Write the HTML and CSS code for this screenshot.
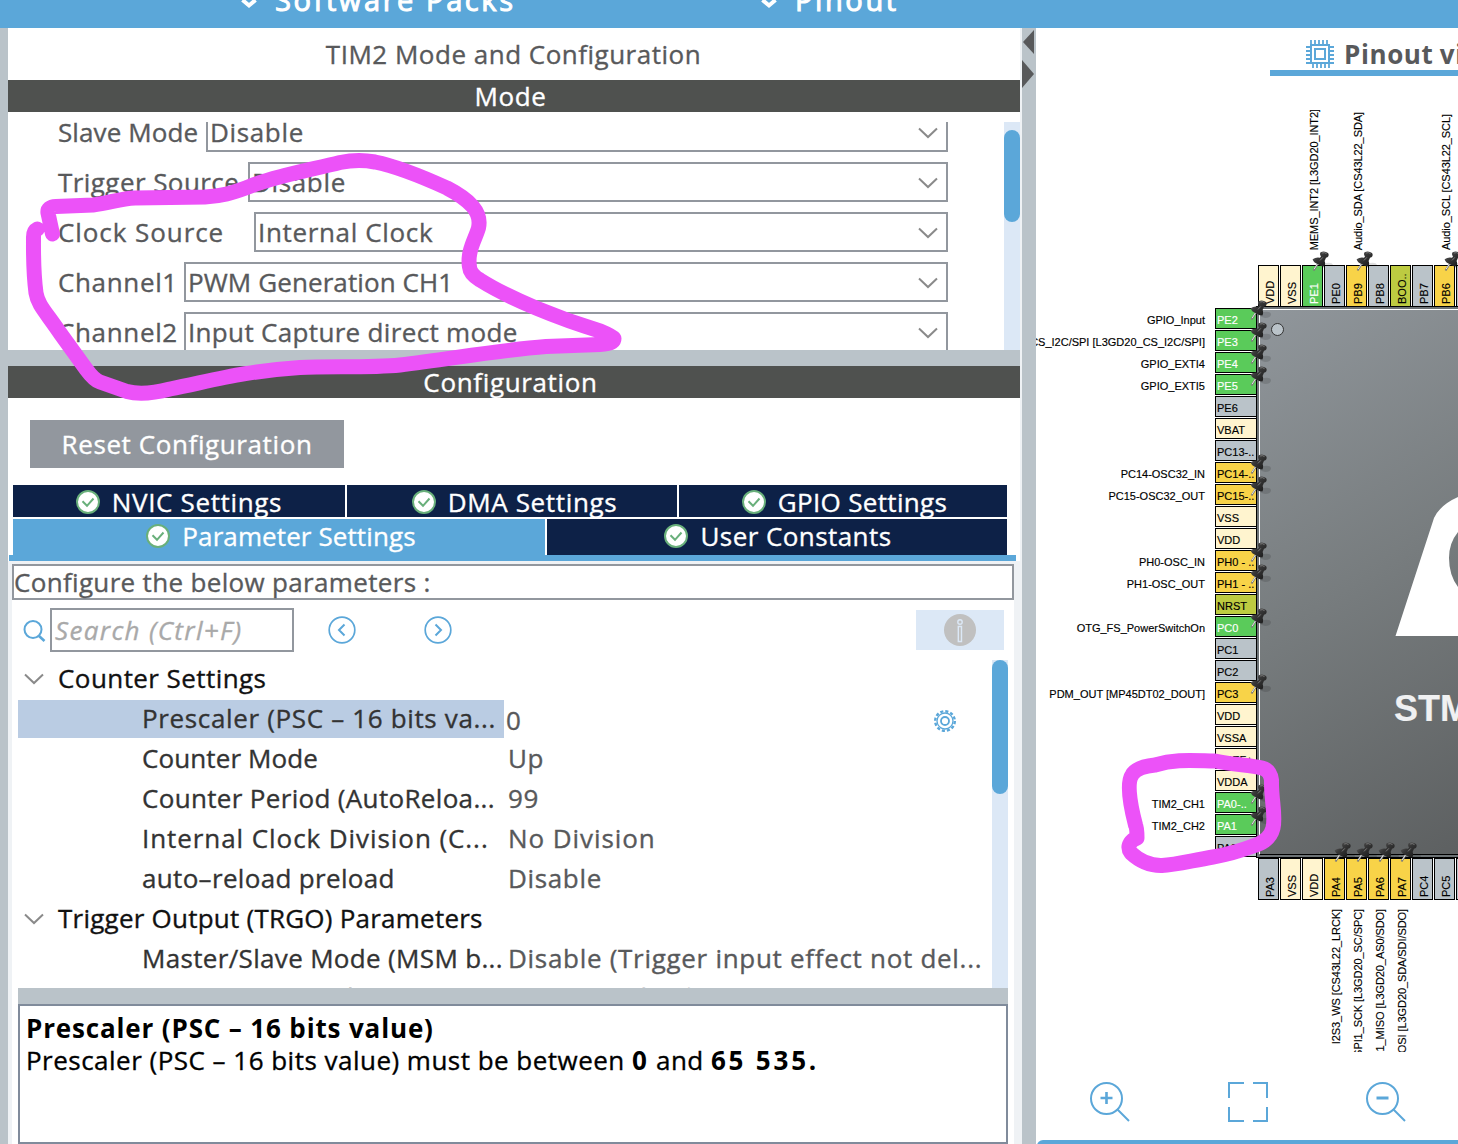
FILE: index.html
```
<!DOCTYPE html>
<html lang="en">
<head>
<meta charset="utf-8">
<title>TIM2 Mode and Configuration</title>
<link rel="stylesheet" href="styles.css">
</head>
<body>
<svg class="defs" width="0" height="0">
  <defs>
    <linearGradient id="metal" x1="0" y1="0" x2="1" y2="1"><stop offset="0" stop-color="#777"/><stop offset=".4" stop-color="#383838"/><stop offset="1" stop-color="#161616"/></linearGradient>
    <symbol id="pushpin" viewBox="0 0 22 22">
      <path d="M9 15 L14 12 Q20 11 21 14 Q21 18 15 18 Q12 18 9 15Z" fill="#000" opacity=".13"/>
      <path d="M1.500 19.500 L6 12.500" stroke="#777" stroke-width="1.900"/><path d="M2.100 18.200 L5.500 12.800" stroke="#eee" stroke-width=".9"/>
      <path d="M0.600 8.200 Q4 6 8 6.800 L9 5.400 Q7.200 3 8.600 1.200 Q12.500 -.6 16 2 Q17.600 4.800 15.400 6.200 L14 6.800 L12.600 10 Q13.800 12.600 12.400 15.600 Q9 15.600 6 13.200 Q1.400 11.600 .6 8.200Z" fill="url(#metal)"/>
      <path d="M10.200 2 Q12.500 1 14.500 2.600" stroke="#8a8a8a" stroke-width=".8" fill="none"/><path d="M8 9.400 L10.800 6.400" stroke="#8a8a8a" stroke-width=".8"/>
    </symbol>
    <symbol id="check" viewBox="0 0 24 24"><circle cx="12" cy="12" r="11" fill="#fff" stroke="#69b07b" stroke-width="2"/><path d="M6.500 11.200 L11 15.800 L17.500 8.500" fill="none" stroke="#69b07b" stroke-width="2"/></symbol>
    <symbol id="chev" viewBox="0 0 20 12"><path d="M1 1.500 L10 10 L19 1.500" fill="none" stroke="#8a8a8a" stroke-width="2"/></symbol>
  </defs>
</svg>

<header class="topbar">
  <div class="menu menu-packs"><svg width="16" height="10" viewBox="0 0 16 10"><path d="M1.500 0 L8 5.500 L14.500 0" fill="none" stroke="#fff" stroke-width="4"/></svg><span>Software Packs</span></div>
  <div class="menu menu-pinout"><svg width="16" height="10" viewBox="0 0 16 10"><path d="M1.500 0 L8 5.500 L14.500 0" fill="none" stroke="#fff" stroke-width="4"/></svg><span>Pinout</span></div>
</header>

<main class="workspace">
  <section class="config">
    <h1 class="title">TIM2 Mode and Configuration</h1>
    <h2 class="bar">Mode</h2>
    <div class="mode">
      <div class="fields">
        <div class="field"><label class="l-slave t1">Slave Mode</label><div class="select"><span>Disable</span><svg><use href="#chev"/></svg></div></div>
        <div class="field"><label class="l-trigger t4">Trigger Source</label><div class="select"><span>Disable</span><svg><use href="#chev"/></svg></div></div>
        <div class="field"><label class="l-clock t9">Clock Source</label><div class="select"><span>Internal Clock</span><svg><use href="#chev"/></svg></div></div>
        <div class="field"><label class="l-channel">Channel1</label><div class="select"><span class="t1">PWM Generation CH1</span><svg><use href="#chev"/></svg></div></div>
        <div class="field"><label class="l-channel">Channel2</label><div class="select"><span class="t3">Input Capture direct mode</span><svg><use href="#chev"/></svg></div></div>
      </div>
      <div class="scroll scroll-mode"><i></i></div>
    </div>
    <div class="splitter"></div>
    <h2 class="bar">Configuration</h2>
    <div class="reset-row"><button class="reset">Reset Configuration</button></div>
    <nav class="tabs tabs-top">
      <a><svg><use href="#check"/></svg>NVIC Settings</a><a><svg><use href="#check"/></svg>DMA Settings</a><a class="t3"><svg><use href="#check"/></svg>GPIO Settings</a>
    </nav>
    <nav class="tabs tabs-bottom">
      <a class="active t1"><svg><use href="#check"/></svg>Parameter Settings</a><a class="t4"><svg><use href="#check"/></svg>User Constants</a>
    </nav>
    <div class="tabline"></div>
    <div class="params">
      <div class="hint t3">Configure the below parameters :</div>
      <div class="search-row">
        <svg class="mag" width="24" height="24" viewBox="0 0 24 24" fill="none" stroke="#5ba7d9"><circle cx="11" cy="10.500" r="8.500" stroke-width="2"/><path d="M17 17 L22.500 22" stroke-width="2.600"/></svg>
        <div class="search">Search (Ctrl+F)</div>
        <svg class="prev" width="28" height="28" viewBox="0 0 28 28" fill="none" stroke="#5ba7d9"><circle cx="14" cy="14" r="12.800" stroke-width="1.700"/><path d="M16.500 8.500 L11 14 L16.500 19.500" stroke-width="2"/></svg>
        <svg class="next" width="28" height="28" viewBox="0 0 28 28" fill="none" stroke="#5ba7d9"><circle cx="14" cy="14" r="12.800" stroke-width="1.700"/><path d="M11.500 8.500 L17 14 L11.500 19.500" stroke-width="2"/></svg>
        <div class="info"><svg width="32" height="32" viewBox="0 0 32 32"><circle cx="16" cy="16" r="16" fill="#c0c0c0"/><circle cx="16" cy="8" r="2.200" fill="none" stroke="#dce8f6" stroke-width="1.400"/><path d="M14.300 12.500 H17.500 V27.500 H14.300Z" fill="none" stroke="#dce8f6" stroke-width="1.400"/></svg></div>
      </div>
      <div class="tree-wrap">
        <div class="tree">
          <div class="group t4"><svg><use href="#chev"/></svg>Counter Settings</div>
          <div class="row selected"><b>Prescaler (PSC – 16 bits va...</b><span>0</span>
            <svg class="gear" width="24" height="24" viewBox="0 0 24 24" fill="none" stroke="#5ba7d9"><circle cx="12" cy="12" r="9.800" stroke-width="2.400" stroke-dasharray="3.100 2.031"/><circle cx="12" cy="12" r="8" stroke-width="1.300"/><circle cx="12" cy="12" r="4" stroke-width="1.800"/></svg></div>
          <div class="row"><b class="t1">Counter Mode</b><span>Up</span></div>
          <div class="row"><b class="t3">Counter Period (AutoReloa...</b><span>99</span></div>
          <div class="row"><b class="t9">Internal Clock Division (C...</b><span class="t9">No Division</span></div>
          <div class="row"><b class="t3">auto–reload preload</b><span>Disable</span></div>
          <div class="group tg"><svg><use href="#chev"/></svg>Trigger Output (TRGO) Parameters</div>
          <div class="row"><b class="t3">Master/Slave Mode (MSM b...</b><span class="t7">Disable (Trigger input effect not del...</span></div>
          <div class="row last"><b>Trigger Event Selection</b><span>Reset (UG bit from TIMx_EGR)</span></div>
        </div>
        <div class="scroll scroll-tree"><i></i></div>
      </div>
      <div class="tree-splitter"></div>
      <div class="details"><strong>Prescaler (PSC – 16 bits value)</strong><p>Prescaler (PSC – 16 bits value) must be between <strong>0</strong> and <strong>65 535.</strong></p></div>
    </div>
  </section>

  <div class="divider"><svg width="14" height="60" viewBox="0 0 14 60" fill="#58595b"><path d="M12 2 V26 L1 14Z"/><path d="M0 32 V60 L12 46Z"/></svg></div>

  <section class="pinout">
    <div class="view-head"><div class="view-tab">
      <svg width="28" height="28" viewBox="0 0 28 28" fill="none" stroke="#5ba7d9" stroke-width="2"><rect x="5" y="5" width="18" height="18"/><rect x="9" y="9" width="10" height="10"/><path d="M5 0V4M9 0V4M13 0V4M17 0V4M21 0V4M7 24V28M11 24V28M15 24V28M19 24V28M23 24V28M0 7H4M0 11H4M0 15H4M0 19H4M0 23H4M24 7H28M24 11H28M24 15H28M24 19H28M24 23H28" stroke-width="1.800"/></svg>
      <span>Pinout view</span></div></div>
    <div class="canvas">
      <div class="side top">
        <div class="col"><em class="power">VDD</em></div>
        <div class="col"><em class="power">VSS</em></div>
        <div class="col"><q>MEMS_INT2 [L3GD20_INT2]</q><em class="on">PE1<svg><use href="#pushpin"/></svg></em></div>
        <div class="col"><em>PE0</em></div>
        <div class="col"><q>Audio_SDA [CS43L22_SDA]</q><em class="warn">PB9<svg><use href="#pushpin"/></svg></em></div>
        <div class="col"><em>PB8</em></div>
        <div class="col"><em class="boot">BOO..</em></div>
        <div class="col"><em>PB7</em></div>
        <div class="col"><q>Audio_SCL [CS43L22_SCL]</q><em class="warn">PB6<svg><use href="#pushpin"/></svg></em></div>
        <div class="col"><em></em></div>
      </div>
      <div class="middle">
        <div class="left">
          <div class="pin"><q>GPIO_Input</q><em class="on">PE2<svg><use href="#pushpin"/></svg></em></div>
          <div class="pin"><q>CS_I2C/SPI [L3GD20_CS_I2C/SPI]</q><em class="on">PE3<svg><use href="#pushpin"/></svg></em></div>
          <div class="pin"><q>GPIO_EXTI4</q><em class="on">PE4<svg><use href="#pushpin"/></svg></em></div>
          <div class="pin"><q>GPIO_EXTI5</q><em class="on">PE5<svg><use href="#pushpin"/></svg></em></div>
          <div class="pin"><em>PE6</em></div>
          <div class="pin"><em class="power">VBAT</em></div>
          <div class="pin"><em>PC13-..</em></div>
          <div class="pin"><q>PC14-OSC32_IN</q><em class="warn">PC14-..<svg><use href="#pushpin"/></svg></em></div>
          <div class="pin"><q>PC15-OSC32_OUT</q><em class="warn">PC15-..<svg><use href="#pushpin"/></svg></em></div>
          <div class="pin"><em class="power">VSS</em></div>
          <div class="pin"><em class="power">VDD</em></div>
          <div class="pin"><q>PH0-OSC_IN</q><em class="warn">PH0 - ..<svg><use href="#pushpin"/></svg></em></div>
          <div class="pin"><q>PH1-OSC_OUT</q><em class="warn">PH1 - ..<svg><use href="#pushpin"/></svg></em></div>
          <div class="pin"><em class="boot">NRST</em></div>
          <div class="pin"><q>OTG_FS_PowerSwitchOn</q><em class="on">PC0<svg><use href="#pushpin"/></svg></em></div>
          <div class="pin"><em>PC1</em></div>
          <div class="pin"><em>PC2</em></div>
          <div class="pin"><q>PDM_OUT [MP45DT02_DOUT]</q><em class="warn">PC3<svg><use href="#pushpin"/></svg></em></div>
          <div class="pin"><em class="power">VDD</em></div>
          <div class="pin"><em class="power">VSSA</em></div>
          <div class="pin"><em class="power">VREF+</em></div>
          <div class="pin"><em class="power">VDDA</em></div>
          <div class="pin"><q>TIM2_CH1</q><em class="on">PA0-..<svg><use href="#pushpin"/></svg></em></div>
          <div class="pin"><q>TIM2_CH2</q><em class="on">PA1<svg><use href="#pushpin"/></svg></em></div>
          <div class="pin"><em>PA2</em></div>
        </div>
        <div class="chip"><div class="die">
          <i class="dot"></i>
          <svg class="logo" width="64" height="140" viewBox="1394 496 64 140"><path fill="#fff" fill-rule="evenodd" d="M1395.500 636 L1434 518 Q1440 505 1458 497 V532 Q1449 543 1449 558 Q1449 575 1458 587 V636Z"/></svg>
          <span class="chip-name">STM32F407</span>
        </div></div>
      </div>
      <div class="side bottom">
        <div class="col"><em>PA3</em></div>
        <div class="col"><em class="power">VSS</em></div>
        <div class="col"><em class="power">VDD</em></div>
        <div class="col"><em class="warn">PA4<svg><use href="#pushpin"/></svg></em><q>I2S3_WS [CS43L22_LRCK]</q></div>
        <div class="col"><em class="warn">PA5<svg><use href="#pushpin"/></svg></em><q>SPI1_SCK [L3GD20_SC/SPC]</q></div>
        <div class="col"><em class="warn">PA6<svg><use href="#pushpin"/></svg></em><q>SPI1_MISO [L3GD20_AS0/SDO]</q></div>
        <div class="col"><em class="warn">PA7<svg><use href="#pushpin"/></svg></em><q>SPI1_MOSI [L3GD20_SDA/SDI/SDO]</q></div>
        <div class="col"><em>PC4</em></div>
        <div class="col"><em>PC5</em></div>
        <div class="col"><em></em></div>
      </div>
    </div>
    <div class="zoombar">
      <svg width="40" height="40" viewBox="0 0 40 40" fill="none" stroke="#5ba7d9" stroke-width="2"><circle cx="16.500" cy="16.500" r="15.500"/><path d="M27 27 L39 39"/><path d="M10.500 16H22.500M16.500 10V22" stroke-width="2.600"/></svg>
      <svg width="40" height="40" viewBox="0 0 40 40" fill="none" stroke="#5ba7d9" stroke-width="2"><path d="M1 16V1H16M25 1H39V16M39 25V39H25M16 39H1V25"/></svg>
      <svg width="40" height="40" viewBox="0 0 40 40" fill="none" stroke="#5ba7d9" stroke-width="2"><circle cx="16.500" cy="16.500" r="15.500"/><path d="M27 27 L39 39"/><path d="M10.500 16H22.500" stroke-width="3"/></svg>
    </div>
    <div class="foot"></div>
  </section>
</main>

<svg class="marker" width="1458" height="1144" viewBox="0 0 1458 1144" fill="none" stroke="#ec52f8" stroke-width="15" stroke-linecap="round" stroke-linejoin="round">
  <path d="M52.500 234 L48 213 Q47 207 56 206.500 L93 205 C110 203 120 198.500 135 198 L205 197 C222 196 232 193 247 187.500 C270 177 310 170 340 162.500 Q358 159 375 162 C400 167 425 178 447 188 C470 200 482 212 478.500 228 C475 240 467 251 469.500 267 Q470 274 480 280 C510 299 560 319 600 331 Q612 336 614 338.500 Q614 344 600 344.500 L546 346.500 C500 350 450 359 400 365 C370 368 330 366 300 367.500 C245 371 215 380 170 389 Q143 396 127 391.500 L100 382 Q94 380 86 369 L60 333 C45 311 38 305 36 293 C33 270 33.500 250 33.500 237 Q33.500 231 37.500 229"/>
  <path d="M1137 838 Q1137 828 1135.500 825 Q1125 785 1132 775 Q1136 767 1155 765 C1175 759 1190 760.500 1215 761 C1235 765 1250 765 1262 768 Q1270 770 1271.500 780 C1271 800 1276 815 1273 828 Q1270 840 1256 845 C1240 851 1225 855 1213 857 C1190 861 1175 865 1162 865.500 Q1145 866 1131 853 Q1126 846 1133 840 Z"/>
</svg>
</body>
</html>
```
FILE: styles.css
```
* { box-sizing: border-box; }
body { margin: 0; width: 1458px; height: 1144px; overflow: hidden; background: #fff; color: #58595b; font: 26px/32px "Open Sans", "Noto Sans", sans-serif; letter-spacing: .65px; -webkit-text-stroke: .35px; position: relative; }
svg { display: block; flex: none; }
.defs { position: absolute; }
h1, h2, p { margin: 0; font: inherit; }
.t1 { letter-spacing: .1px; }
.tg { letter-spacing: .23px; }
.t3 { letter-spacing: .33px; }
.t4 { letter-spacing: .43px; }
.t7 { letter-spacing: .7px; }
.t9 { letter-spacing: .93px; }

.topbar { height: 28px; background: #5ba7d9; display: flex; overflow: hidden; color: #fff; font-size: 29px; font-weight: 500; letter-spacing: 2.6px; -webkit-text-stroke: 1px; }
.menu { display: flex; gap: 18px; line-height: 36px; }
.menu span { margin-top: -18px; }
.menu-packs { margin-left: 241px; width: 520px; }

.workspace { display: flex; height: 1116px; }
.config { width: 1022px; height: 1116px; border-left: 8px solid #bac3c9; display: flex; flex-direction: column; background: #fff; border-right: 2px solid #eff2f5; }
.title { height: 52px; line-height: 52px; text-align: center; letter-spacing: .5px; padding-right: 1px; }
.bar { height: 32px; line-height: 32px; background: #4f514f; color: #fff; text-align: center; padding-right: 7px; flex: none; }
.mode { height: 238px; padding-top: 10px; display: flex; justify-content: space-between; }
.fields { width: 940px; height: 228px; overflow: hidden; display: flex; flex-direction: column; gap: 10px; }
.field { display: flex; height: 40px; flex: none; padding-left: 50px; line-height: 40px; }
.field:first-child { height: 30px; line-height: 21px; }
.field:first-child .select { border-top: 0; }
.field:first-child .select svg { margin-top: 5px; }
.l-slave { width: 148px; }
.l-trigger { width: 190px; }
.l-clock { width: 196px; }
.l-channel { width: 126px; }
.field:not(:first-child) .select { line-height: 36px; }
.select { flex: 1; border: 2px solid #92979e; display: flex; justify-content: space-between; padding: 0 8px 0 2px; }
.select svg { width: 20px; height: 12px; margin-top: 13px; }
.scroll { width: 16px; background: #dce8f6; }
.scroll i { display: block; background: #5ba7d9; border-radius: 8px; }
.scroll-mode { padding-top: 8px; }
.scroll-mode i { height: 92px; }
.splitter { height: 16px; background: #bac3c9; flex: none; }

.reset-row { height: 87px; padding: 22px 0 0 22px; flex: none; }
.reset { width: 314px; height: 48px; border: 0; background: #92979e; color: #fff; font: inherit; letter-spacing: .6px; padding: 0 0 1px; }
.tabs { display: flex; gap: 2px; padding-left: 5px; color: #fff; flex: none; }
.tabs a { display: flex; justify-content: center; gap: 12px; background: #0d2147; }
.tabs svg { width: 24px; height: 24px; }
.tabs-top { height: 34px; padding-bottom: 2px; }
.tabs-top a { width: 332px; line-height: 34px; overflow: hidden; }
.tabs-top a:nth-child(2) { width: 330px; padding-left: 5px; }
.tabs-top a:nth-child(3) { width: 328px; padding-left: 3px; }
.tabs-top svg { margin-top: 5px; }
.tabs-bottom { height: 36px; }
.tabs-bottom a { width: 460px; line-height: 34px; padding-left: 2px; }
.tabs-bottom a.active { width: 532px; padding-left: 4px; background: #5ba7d9; }
.tabs-bottom svg { margin-top: 5px; }
.tabline { height: 6px; margin: 0 4px 0 1px; background: #5ba7d9; flex: none; }
.params { height: 583px; padding-top: 3px; border: solid #eff2f5; border-width: 0 6px 0 4px; }
.hint { height: 36px; border: 2px solid #92979e; line-height: 32px; box-shadow: 0 -3px #eff2f5; }
.search-row { height: 60px; display: flex; padding-top: 8px; }
.mag { margin: 11px 4px 0 10px; }
.search { width: 244px; height: 44px; border: 2px solid #92979e; font-style: italic; color: #a9a9a9; line-height: 40px; padding-left: 3px; letter-spacing: 1.35px; }
.prev { margin: 8px 0 0 34px; }
.next { margin: 8px 0 0 68px; }
.info { width: 88px; height: 40px; margin: 2px 0 0 464px; background: #dce8f6; padding: 4px 0 0 28px; }
.tree-wrap { height: 328px; display: flex; padding-left: 6px; }
.tree { width: 974px; overflow: hidden; line-height: 36px; white-space: nowrap; }
.group { height: 40px; display: flex; gap: 14px; padding-left: 6px; color: #111; }
.group svg { width: 20px; height: 12px; margin-top: 13px; }
.row { height: 40px; display: flex; }
.row b { font-weight: 400; color: #333; width: 486px; height: 38px; padding-left: 124px; flex: none; }
.row span { padding-left: 4px; }
.last { line-height: 34px; }
.selected b { background: #bacce3; }
.selected span { padding: 2px 0 0 2px; width: 429px; }
.gear { margin-top: 9px; }
.scroll-tree i { height: 134px; }
.tree-splitter { height: 16px; margin: 0 6px; background: #bac3c9; }
.details { height: 140px; margin: 0 6px; border: 2px solid #808b9b; color: #000; padding: 6px 6px; letter-spacing: .48px; }
.details strong { font-weight: 700; letter-spacing: .85px; -webkit-text-stroke: 0; }
.details p strong { letter-spacing: 2.8px; }
.details p strong:first-child { letter-spacing: 1.8px; }

.divider { width: 14px; background: #bac3c9; flex: none; }
.pinout { width: 422px; overflow: hidden; }
.view-head { height: 82px; padding-left: 234px; }
.view-tab { width: 300px; height: 48px; border-bottom: 6px solid #5ba7d9; display: flex; gap: 10px; padding: 12px 0 0 36px; font-weight: 700; white-space: nowrap; -webkit-text-stroke: 0; letter-spacing: .6px; word-spacing: -1px; }
.view-tab span { line-height: 28px; }

.canvas { font: 11px/20px "Liberation Sans", Arial, sans-serif; letter-spacing: 0; -webkit-text-stroke: .15px; color: #000; height: 942px; overflow: hidden; white-space: nowrap; }
.canvas q { quotes: none; }
.canvas em { font-style: normal; border: 1px solid #000; background: #bac3c9; position: relative; }
.canvas em.power { background: #fff4cf; }
.canvas em.on { background: #5acb5a; color: #fff; }
.canvas em.warn { background: #f8d348; }
.canvas em.boot { background: #bdcb41; }
.canvas em svg { position: absolute; width: 22px; height: 22px; z-index: 2; }
.side { display: flex; gap: 1px; padding-left: 222px; }
.col { width: 21px; height: 100%; display: flex; flex-direction: column; flex: none; }
.col em { width: 21px; height: 42px; flex: none; }
.col em, .col q { writing-mode: vertical-rl; transform: rotate(180deg); }
.col em { padding-top: 2px; line-height: 23px; direction: ltr; }
.col q { line-height: 17px; margin-left: 4px; letter-spacing: -.08px; }
.col em svg { transform: rotate(180deg); }
.top { height: 197px; }
.top .col { justify-content: flex-end; }
.top q { margin-bottom: 15px; }
.top em svg { left: -12px; top: 33px; }
.bottom { height: 194px; position: relative; }
.bottom em svg { left: -12px; top: 35px; }
.bottom q { margin-top: 9px; }
.middle { display: flex; height: 551px; }
.left { width: 221px; padding-top: 1px; display: flex; flex-direction: column; gap: 1px; }
.pin { height: 21px; display: flex; justify-content: flex-end; line-height: 24px; }
.pin q { padding-right: 10px; }
.pin em { width: 42px; padding-left: 1px; line-height: 23px; flex: none; }
.pin em svg { left: 34px; top: -9px; }
.chip { flex: 1; margin: -1px 0 0 -1px; border: 1px solid #000; border-right: 0; padding: 2px 0 2px 2px; background: #6d7376; }
.die { height: 100%; border: 1px solid #fff; border-right: 0; border-bottom: 1px solid #000; background: linear-gradient(150deg, #90969b 0%, #777c7e 50%, #5d6061 100%); position: relative; }
.dot { position: absolute; left: 11px; top: 13px; width: 13px; height: 13px; border: 1px solid #333; border-radius: 50%; background: #bac3c9; }
.logo { position: absolute; left: 134px; top: 186px; }
.chip-name { position: absolute; left: 134px; top: 379px; font: bold 36px/40px "Liberation Sans", Arial, sans-serif; color: #f0f1f2; }
.zoombar { display: flex; gap: 98px; padding: 30px 0 0 54px; height: 88px; }
.foot { height: 6px; margin-left: 1px; background: #5ba7d9; border-radius: 8px 0 0 0; }
.marker { position: absolute; left: 0; top: 0; z-index: 10; pointer-events: none; }
```
